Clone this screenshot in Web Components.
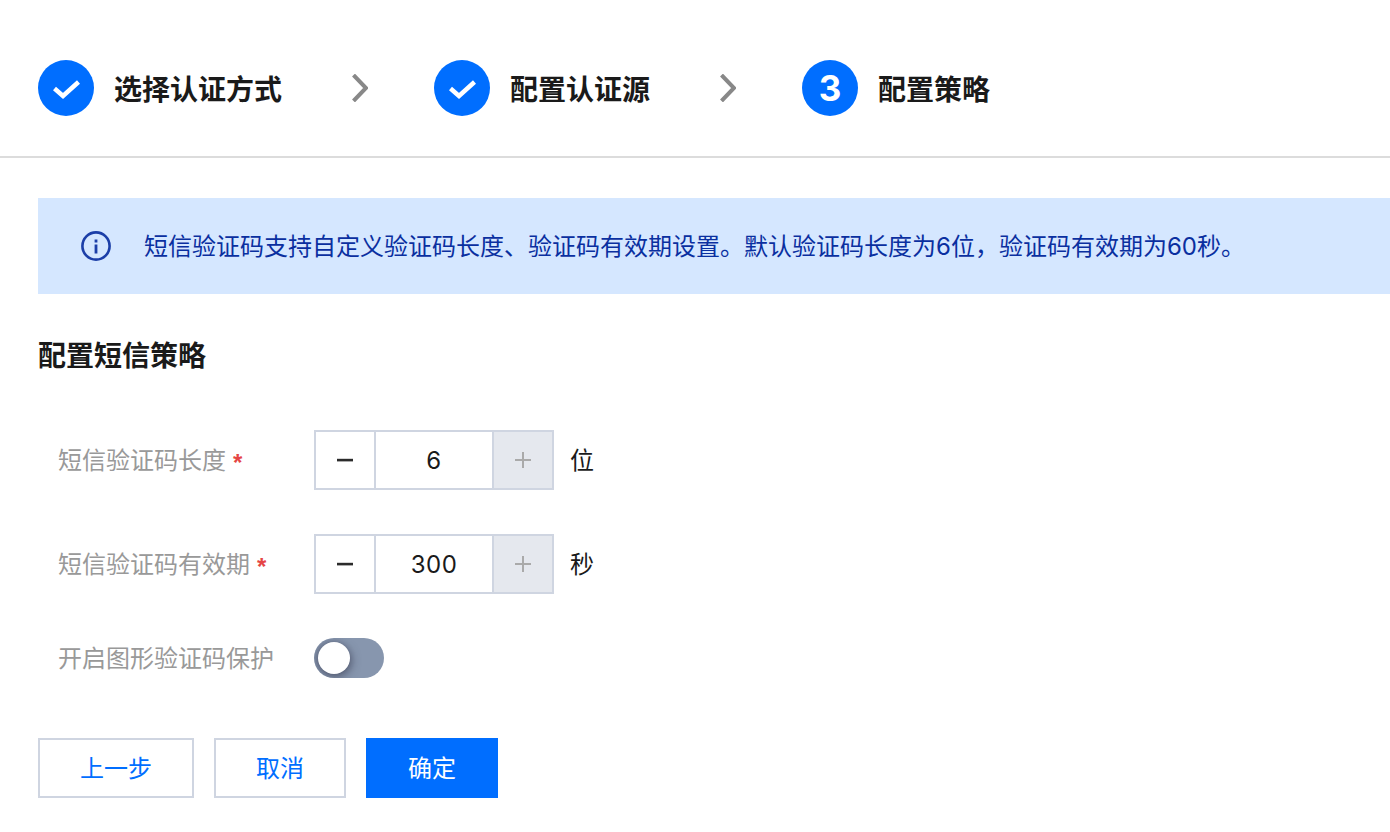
<!DOCTYPE html>
<html lang="zh">
<head>
<meta charset="utf-8">
<title>配置策略</title>
<style>
html, body { margin: 0; background: #fff; }
body { font-family: "Noto Sans CJK SC", "Liberation Sans", sans-serif; color: #1a1a1a; font-size: 24px; }
</style>
</head>
<body>
<step-bar>
  <step-item done>选择认证方式</step-item>
  <step-arrow></step-arrow>
  <step-item done>配置认证源</step-item>
  <step-arrow></step-arrow>
  <step-item num="3">配置策略</step-item>
</step-bar>
<policy-form></policy-form>

<script>
// header steps
class StepBar extends HTMLElement {
  constructor() {
    super();
    this.attachShadow({ mode: "open" }).innerHTML = `
      <style>
        :host { display: flex; align-items: center; height: 136px; padding: 20px 0 0 38px; border-bottom: 2px solid #dcdcdc; }
      </style>
      <slot></slot>`;
  }
}

class StepItem extends HTMLElement {
  constructor() {
    super();
    const num = this.getAttribute("num");
    const mark = num
      ? `<b>${num}</b>`
      : `<svg width="28" height="28" viewBox="0 0 28 28"><path d="M2.5 14.5 L11 22 L26.5 8" fill="none" stroke="#fff" stroke-width="4.5"/></svg>`;
    this.attachShadow({ mode: "open" }).innerHTML = `
      <style>
        :host { display: flex; align-items: center; gap: 20px; font-size: 28px; font-weight: 700; line-height: 40px; color: #1a1a1a; }
        .dot { width: 56px; height: 56px; border-radius: 50%; background: #006eff; color: #fff; display: flex; align-items: center; justify-content: center; }
        b { font: 700 35px "Inter", "Liberation Sans", sans-serif; }
        svg { display: block; }
      </style>
      <span class="dot">${mark}</span><span><slot></slot></span>`;
  }
}

class StepArrow extends HTMLElement {
  constructor() {
    super();
    this.attachShadow({ mode: "open" }).innerHTML = `
      <style>
        :host { display: block; width: 16px; height: 28px; margin: 0 66px 0 70px; }
        svg { display: block; }
      </style>
      <svg width="16" height="28" viewBox="0 0 16 28"><path d="M1.5 1 L14 14 L1.5 27" fill="none" stroke="#888" stroke-width="4"/></svg>`;
  }
}

// blue notice strip
class InfoBanner extends HTMLElement {
  constructor() {
    super();
    this.attachShadow({ mode: "open" }).innerHTML = `
      <style>
        :host { display: flex; align-items: center; height: 96px; margin-left: 38px; padding-left: 43px; gap: 33px; background: #d5e7ff; color: #0a2fa0; font-size: 24px; font-family: "Inter", "Noto Sans CJK SC", sans-serif; }
        svg { display: block; flex: none; }
        span { position: relative; top: -2px; }
      </style>
      <svg width="30" height="30" viewBox="0 0 30 30">
        <circle cx="15" cy="15" r="13.6" fill="none" stroke="#1c3fa8" stroke-width="2.6"/>
        <rect x="13.6" y="13.5" width="2.8" height="9" fill="#1c3fa8"/>
        <rect x="13.6" y="8.5" width="2.8" height="3" fill="#1c3fa8"/>
      </svg>
      <span><slot></slot></span>`;
  }
}

class NumStepper extends HTMLElement {
  constructor() {
    super();
    const val = this.getAttribute("value");
    const unit = this.getAttribute("unit");
    this.attachShadow({ mode: "open" }).innerHTML = `
      <style>
        :host { display: flex; align-items: center; gap: 16px; font-size: 24px; color: #1a1a1a; }
        .box { display: grid; grid-template-columns: 58px 120px 58px; width: 240px; height: 60px; box-sizing: border-box; border: 2px solid #cfd5e1; }
        .box > * { display: flex; align-items: center; justify-content: center; }
        .val { box-sizing: border-box; border-left: 2px solid #cfd5e1; border-right: 2px solid #cfd5e1; font-family: "Inter", "Liberation Sans", sans-serif; letter-spacing: 0.5px; }
        .plus { background: #e5e8ee; }
        .unit { padding-bottom: 4px; }
        svg { display: block; }
      </style>
      <div class="box">
        <span><svg width="16" height="16" viewBox="0 0 16 16"><rect y="6.8" width="16" height="2.6" fill="#2b2b2b"/></svg></span>
        <span class="val">${val}</span>
        <span class="plus"><svg width="16" height="16" viewBox="0 0 16 16"><path d="M0 8H16M8 0V16" stroke="#aaa" stroke-width="2"/></svg></span>
      </div>
      <span class="unit">${unit}</span>`;
  }
}

class FormRow extends HTMLElement {
  constructor() {
    super();
    const req = this.hasAttribute("required") ? `<i>*</i>` : "";
    this.attachShadow({ mode: "open" }).innerHTML = `
      <style>
        :host { display: flex; align-items: center; }
        .lab { width: 276px; padding: 0 0 2px 20px; box-sizing: border-box; color: #999; font-size: 24px; line-height: 34px; flex: none; }
        i { font: normal 700 24px "Liberation Sans", sans-serif; color: #e54545; margin-left: 7px; position: relative; top: 2px; }
      </style>
      <span class="lab">${this.getAttribute("label")}${req}</span>
      <slot></slot>`;
  }
}

class ToggleSwitch extends HTMLElement {
  constructor() {
    super();
    this.attachShadow({ mode: "open" }).innerHTML = `
      <style>
        :host { display: block; width: 70px; height: 40px; border-radius: 20px; background: #8796ae; position: relative; overflow: hidden; }
        .knob { position: absolute; left: 4px; top: 4px; width: 32px; height: 32px; border-radius: 50%; background: #fff; box-shadow: 2px 3px 8px rgba(54,58,80,.55), -2px 0 6px rgba(54,58,80,.4); }
      </style>
      <span class="knob"></span>`;
  }
}

class ActionBtn extends HTMLElement {
  constructor() {
    super();
    this.attachShadow({ mode: "open" }).innerHTML = `
      <style>
        :host { display: flex; align-items: center; justify-content: center; height: 60px; box-sizing: border-box; padding-bottom: 3px; border: 2px solid #cfd5e1; background: #fff; color: #006eff; font-size: 24px; }
        :host([primary]) { background: #006eff; border-color: #006eff; color: #fff; }
      </style>
      <slot></slot>`;
  }
}

class PolicyForm extends HTMLElement {
  constructor() {
    super();
    this.attachShadow({ mode: "open" }).innerHTML = `
      <style>
        :host { display: block; padding-top: 40px; }
        h2 { margin: 40px 0 56px 38px; font-size: 28px; font-weight: 700; line-height: 40px; color: #1a1a1a; }
        .rows { display: flex; flex-direction: column; gap: 44px; margin-left: 38px; }
        .btns { display: flex; margin: 60px 0 0 38px; gap: 20px; }
      </style>
      <info-banner>短信验证码支持自定义验证码长度、验证码有效期设置。默认验证码长度为6位，验证码有效期为60秒。</info-banner>
      <h2>配置短信策略</h2>
      <div class="rows">
        <form-row label="短信验证码长度" required><num-stepper value="6" unit="位"></num-stepper></form-row>
        <form-row label="短信验证码有效期" required><num-stepper value="300" unit="秒"></num-stepper></form-row>
        <form-row label="开启图形验证码保护"><toggle-switch></toggle-switch></form-row>
      </div>
      <div class="btns">
        <action-btn style="width:156px">上一步</action-btn>
        <action-btn style="width:132px">取消</action-btn>
        <action-btn primary style="width:132px">确定</action-btn>
      </div>`;
  }
}

customElements.define("step-bar", StepBar);
customElements.define("step-item", StepItem);
customElements.define("step-arrow", StepArrow);
customElements.define("info-banner", InfoBanner);
customElements.define("num-stepper", NumStepper);
customElements.define("form-row", FormRow);
customElements.define("toggle-switch", ToggleSwitch);
customElements.define("action-btn", ActionBtn);
customElements.define("policy-form", PolicyForm);
</script>
</body>
</html>
